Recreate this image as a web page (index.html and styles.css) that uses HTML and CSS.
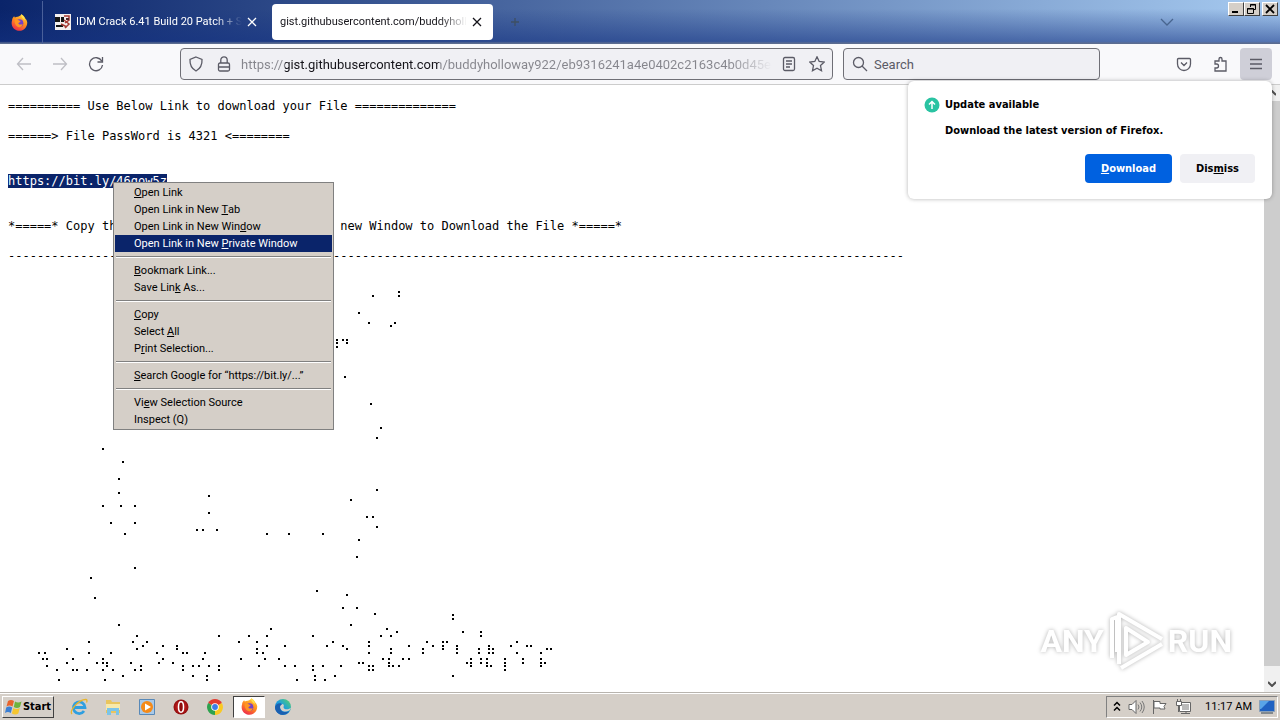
FILE: index.html
```
<!DOCTYPE html>
<html lang="en">
<head>
<meta charset="utf-8">
<title>gist.githubusercontent.com</title>
<link rel="stylesheet" href="styles.css">
</head>
<body>
<svg class="defs" width="0" height="0" aria-hidden="true">
  <defs>
    <linearGradient id="ffBody" x1="0.8" y1="0" x2="0.3" y2="1"><stop offset="0" stop-color="#ffd83c"/><stop offset="0.5" stop-color="#ff8a1e"/><stop offset="1" stop-color="#ee2a4c"/></linearGradient>
    <radialGradient id="opBody"><stop offset="0" stop-color="#e33"/><stop offset="1" stop-color="#8e0b0b"/></radialGradient>
    <linearGradient id="edgeBody" x1="0" y1="1" x2="1" y2="0"><stop offset="0" stop-color="#1464b4"/><stop offset="0.5" stop-color="#1b9de0"/><stop offset="1" stop-color="#5bd65f"/></linearGradient>
    <symbol id="firefox" viewBox="0 0 16 16">
      <path d="M1 6C1 4 2 3 3 2l.6 1.4C4.600 2.600 5.500 2.500 6.500 2.600 8 2 9 1.500 9.700.200 12 1.500 13 3 13.400 4.200c.8.5 1.600 1.800 1.900 3.800C15.300 12.500 12 15.800 8 15.800S.6 12.600.6 8.600C.6 7.500.7 6.700 1 6z" fill="url(#ffBody)"/>
      <circle cx="8" cy="8.600" r="3.600" fill="#7441c8"/>
      <path d="M3.500 5.500c1.500-.8 3-.5 4 .5 1 .3 1.500.2 1.500.8S7.500 8 7 8.500c0 1.500 2 2 4 .8C10.500 12 8 13 6 12S3 8 3.500 5.500z" fill="#ff9422"/>
      <path d="M9.700.200C12 1.500 13.200 3.200 13 6 12 4.500 9 3.500 9.700.200z" fill="#ffe14c"/>
    </symbol>
  </defs>
</svg>

<header class="browser">
  <div class="titlebar">
    <button class="view-button" aria-label="Firefox View"><svg width="17" height="17"><use href="#firefox"/></svg></button>
    <div class="tab">
      <svg class="favicon" width="16" height="16" viewBox="0 0 16 16"><path fill="#f4f0f0" d="M0 0h16v16H0z"/><path fill="#151515" d="M0 3h5v5H0zM6 3h3v5H6zM1 11h7v2H1z"/><path fill="none" stroke="#a63a32" stroke-width="1.500" d="M9 2h5v4l-4 3M9 6l5 4-4 4M6 10l6 3"/><path fill="#51282a" d="M11 4h3v2h-3z"/></svg>
      <button class="tab-title">IDM Crack 6.41 Build 20 Patch + Serial</button>
      <button class="close" aria-label="Close tab"><svg width="10" height="10" viewBox="0 0 10 10"><path d="M1 1l8 8M9 1L1 9"/></svg></button>
    </div>
    <div class="tab active">
      <button class="tab-title">gist.githubusercontent.com/buddyholloway922</button>
      <button class="close" aria-label="Close tab"><svg width="10" height="10" viewBox="0 0 10 10"><path d="M1 1l8 8M9 1L1 9"/></svg></button>
    </div>
    <button class="new-tab" aria-label="New tab"><svg width="10" height="10" viewBox="0 0 10 10"><path d="M5 1v8M1 5h8"/></svg></button>
    <button class="list-tabs" aria-label="List all tabs"><svg width="14" height="9" viewBox="0 0 14 9"><path d="M1 1l6 6 6-6"/></svg></button>
    <div class="window-buttons">
      <button aria-label="Minimize"><svg width="10" height="10" viewBox="0 0 10 10"><path fill="#000" d="M1 7h6v2H1z"/></svg></button>
      <button aria-label="Restore"><svg width="10" height="10" viewBox="0 0 10 10"><path fill="none" stroke="#000" d="M3.500 3V.5h5v5H7M.5 4.500h6v5h-6zM3 1h6M0 5h7"/></svg></button>
      <button class="window-close" aria-label="Close"><svg width="10" height="10" viewBox="0 0 10 10"><path stroke="#000" stroke-width="1.800" d="M1 1l8 8M9 1L1 9"/></svg></button>
    </div>
  </div>

  <div class="toolbar">
    <div class="nav">
      <button class="disabled" aria-label="Back" disabled><svg width="16" height="16" viewBox="0 0 16 16"><path d="M15 8H1.500M7 2L1.500 8 7 14"/></svg></button>
      <button class="disabled" aria-label="Forward" disabled><svg width="16" height="16" viewBox="0 0 16 16"><path d="M1 8h13.500M9 2l5.500 6L9 14"/></svg></button>
      <button aria-label="Reload"><svg width="16" height="16" viewBox="0 0 16 16"><path d="M13.700 5A6.500 6.500 0 1 0 14.500 9M14.500 1v5h-5"/></svg></button>
    </div>
    <div class="field address">
      <svg width="16" height="16" viewBox="0 0 16 16"><path d="M8 1l6 2.500c.3 5-1.500 9-6 11.500-4.500-2.500-6.300-6.500-6-11.500z"/></svg>
      <svg width="16" height="16" viewBox="0 0 16 16"><rect x="2.500" y="7" width="11" height="8" rx="1.500"/><path d="M4.800 7V4a3.200 3.200 0 0 1 6.400 0v3M3 11h10"/></svg>
      <input class="url" type="text" aria-label="Address" value="https://gist.githubusercontent.com/buddyholloway922/eb9316241a4e0402c2163c4b0d45edbf">
      <button aria-label="Reader view"><svg width="16" height="16" viewBox="0 0 16 16"><rect x="2.500" y="1.500" width="11" height="13" rx="1.500"/><path d="M5 5h6M5 8h6M5 11h4"/></svg></button>
      <button aria-label="Bookmark this page"><svg width="16" height="16" viewBox="0 0 16 16"><path d="M8 .8l2.200 4.700 5.100.6-3.800 3.500 1 5.100L8 12.200l-4.500 2.500 1-5.100L.7 6.100l5.100-.6z"/></svg></button>
    </div>
    <div class="field search">
      <svg width="16" height="16" viewBox="0 0 16 16"><circle cx="6.500" cy="6.500" r="5"/><path d="M10 10l5 5"/></svg>
      <input type="text" aria-label="Search" placeholder="Search">
    </div>
    <div class="actions">
      <button aria-label="Save to Pocket"><svg width="16" height="16" viewBox="0 0 16 16"><path d="M2.500 2.500h11a1 1 0 0 1 1 1V8a6.500 6.500 0 0 1-13 0V3.500a1 1 0 0 1 1-1zM5 6.500l3 3 3-3"/></svg></button>
      <button aria-label="Extensions"><svg width="16" height="16" viewBox="0 0 16 16"><path d="M3 5h4V3a1.500 1.500 0 0 1 3 0v2h4v10H3v-3h1.500a1.500 1.500 0 0 0 0-4H3z"/></svg></button>
      <button class="menu-open" aria-label="Open application menu"><svg width="16" height="16" viewBox="0 0 16 16"><path d="M2 3.500h12M2 8h12M2 12.500h12"/></svg></button>
    </div>
  </div>

  <section class="popup">
    <svg width="16" height="16" viewBox="0 0 16 16"><circle cx="8" cy="8" r="7.500" fill="#2ac3a2"/><path d="M8 12V4.500M5 7.500l3-3 3 3" fill="none" stroke="#fff" stroke-width="1.500"/></svg>
    <div class="popup-text">
      <h2>Update available</h2>
      <p>Download the latest version of Firefox.</p>
    </div>
    <div class="popup-buttons">
      <button class="primary"><u>D</u>ownload</button>
      <button>Dis<u>m</u>iss</button>
    </div>
  </section>
</header>

<main class="viewport">
  <div class="document">
<pre>========== Use Below Link to download your File ==============

======&gt; File PassWord is 4321 &lt;========


<span class="selected">https://bit.ly/46gow5z</span>


*=====* Copy the Link and Paste it inside the new Window to Download the File *=====*

----------------------------------------------------------------------------------------------------------------------------</pre>
    <svg class="dots" width="560" height="419" viewBox="8 264 560 419" role="img" aria-label="Dot art"></svg>
  </div>
  <div class="scrollbar">
    <button aria-label="Scroll up"><svg width="8" height="6" viewBox="0 0 8 6"><path d="M0 5l4-4 4 4"/></svg></button>
    <div class="thumb"></div>
    <button aria-label="Scroll down"><svg width="8" height="6" viewBox="0 0 8 6"><path d="M0 1l4 4 4-4"/></svg></button>
  </div>

  <div class="watermark">
    <span>ANY</span>
    <svg width="58" height="62" viewBox="0 0 58 62"><path d="M5 48V9l5-2v35M12 54V4l43 25M19 18v27l22-13zM14 58l41-24"/></svg>
    <span>RUN</span>
  </div>
</main>

<div class="context-menu" role="menu">
  <button role="menuitem"><u>O</u>pen Link</button>
  <button role="menuitem">Open Link in New <u>T</u>ab</button>
  <button role="menuitem">Open Link in New Win<u>d</u>ow</button>
  <button role="menuitem" class="highlight">Open Link in New <u>P</u>rivate Window</button>
  <hr>
  <button role="menuitem"><u>B</u>ookmark Link...</button>
  <button role="menuitem">Save Lin<u>k</u> As...</button>
  <hr>
  <button role="menuitem"><u>C</u>opy</button>
  <button role="menuitem">Select <u>A</u>ll</button>
  <button role="menuitem">P<u>r</u>int Selection...</button>
  <hr>
  <button role="menuitem"><u>S</u>earch Google for “https://bit.ly/...”</button>
  <hr>
  <button role="menuitem">Vi<u>e</u>w Selection Source</button>
  <button role="menuitem">Inspect (Q)</button>
</div>

<footer class="taskbar">
  <button class="start"><svg width="17" height="16" viewBox="0 0 17 16"><path fill="#e8632c" d="M3 2q3-2 6 0L7.500 7.500q-3-2-6 0z"/><path fill="#6fb33d" d="M10 2.500q3 2 6.500 0L15 8q-3 2-6.200 0z"/><path fill="#3b7fd4" d="M1.200 8.500q3-2 6 0L5.800 14q-3-2-5.800 0z"/><path fill="#f6c62f" d="M8.300 9q3 2 6.500 0l-1.500 5.500q-3 2-6.400 0z"/></svg>Start</button>
  <div class="launchers">
    <button aria-label="Internet Explorer"><svg width="18" height="18" viewBox="0 0 18 18"><path fill="none" stroke="#2f9fe0" stroke-width="2.800" d="M4 9.500h11A5.800 5.800 0 1 0 14 13"/><path fill="none" stroke="#e8b52c" stroke-width="1.300" d="M2 16C-1 13 9 1 16 1.500c1.500.3 1 2 .5 3"/></svg></button>
    <button aria-label="File Explorer"><svg width="18" height="18" viewBox="0 0 18 18"><path fill="#e9c55e" d="M2 2h5l1 2h8v11H2z"/><path fill="#f8e9a9" d="M2 6h14v6H2z"/><path fill="#7cc4e8" d="M3 10h12v7h-3v-4H7v4H3z"/></svg></button>
    <button aria-label="Media Player"><svg width="18" height="18" viewBox="0 0 18 18"><path fill="#a9c9e8" stroke="#5889b8" d="M1.500 1.500h15v15h-15z"/><circle cx="9" cy="9" r="6" fill="#f58a18"/><path fill="#fff" d="M7 5.500v7l6-3.500z"/></svg></button>
    <button aria-label="Opera"><svg width="18" height="18" viewBox="0 0 18 18"><circle cx="9" cy="9" r="7.500" fill="url(#opBody)"/><ellipse cx="9" cy="9" rx="2.500" ry="5.200" fill="#8e0b0b" stroke="#fff" stroke-width="1.500"/></svg></button>
    <button aria-label="Chrome"><svg width="18" height="18" viewBox="0 0 18 18"><path fill="#e23c30" d="M9 9L2.100 5A8 8 0 0 1 15.900 5z"/><path fill="#f9c922" d="M9 9l6.900-4A8 8 0 0 1 9 17z"/><path fill="#2ea24e" d="M9 9v8A8 8 0 0 1 2.100 5z"/><circle cx="9" cy="9" r="3.800" fill="#fff"/><circle cx="9" cy="9" r="2.900" fill="#3b7de8"/></svg></button>
    <button class="running" aria-label="Firefox"><svg width="17" height="17"><use href="#firefox"/></svg></button>
    <button aria-label="Edge"><svg width="18" height="18" viewBox="0 0 18 18"><circle cx="9" cy="9" r="8" fill="url(#edgeBody)"/><path fill="#d5cfc8" d="M9.500 9c1-2 0-3-1.500-3C5 6 5.500 13 10 13.500c2 .3 4-.2 5.800-1.500l1.500-2.500C15 12 9.500 12 9.500 9z"/><path fill="#1a5fb0" d="M1 9c1-4 6-5 7-2.500C5 7 5 13 10 14c2 .3 4 0 5.500-1-3 4.500-8 4.500-11 2.500Q1 13 1 9z"/></svg></button>
  </div>
  <div class="tray">
    <svg width="8" height="11" viewBox="0 0 8 11"><path d="M1 4.500l3-3 3 3M1 9.500l3-3 3 3" fill="none" stroke="#000" stroke-width="1.500"/></svg>
    <svg width="17" height="16" viewBox="0 0 17 16"><path d="M1 5.500h3l4-4v13l-4-4H1z" fill="#fff" stroke="#666"/><path d="M10 5.500q2 2.500 0 5M12 3.500q3.500 4.500 0 9M14 2q4.500 6 0 12" fill="none" stroke="#777"/></svg>
    <svg width="16" height="16" viewBox="0 0 16 16"><path d="M1.500 1v14M2 2.500h6v2h6l-2 3 1 2.500H8V9H2z" fill="#fff" stroke="#666"/></svg>
    <svg width="17" height="16" viewBox="0 0 17 16"><path d="M4.500 3.500h11v9h-11zM6 14.500h9M11 12v3" fill="#fff" stroke="#666"/><path fill="#bbb" d="M7 5h7v6H7z"/><path d="M1.500 2.500h5v4h-5zM3.500 7v6M2.500 0v3M5.500 0v3" fill="#fff" stroke="#666"/></svg>
    <time>11:17 AM</time>
    <svg width="16" height="14" viewBox="0 0 16 14"><path d="M.5.5h15v11H.5z" fill="#1f62c2" stroke="#8aa0b8"/><path d="M1 1h9L2 9H1z" fill="#58a5e8"/><path d="M2 13h12" stroke="#345"/></svg>
  </div>
</footer>
<script src="dots.js"></script>
</body>
</html>
```
FILE: styles.css
```
* { box-sizing: border-box; }
body {
  margin: 0;
  min-height: 100vh;
  display: flex;
  flex-direction: column;
  position: relative;
  background: #fff;
  color: #000;
  font: 11px/16px Roboto, "Liberation Sans", sans-serif;
}
button, input { font: inherit; color: inherit; border: 0; background: none; padding: 0; margin: 0; }
button { display: flex; align-items: center; justify-content: center; flex: none; }
svg { flex: none; display: block; }
u { text-decoration: underline; text-underline-offset: 1px; }
.defs { position: absolute; }

.browser { position: relative; }
.titlebar {
  height: 44px;
  display: flex;
  align-items: center;
  background: linear-gradient(to bottom, rgba(20, 50, 130, 0) 20%, rgba(20, 50, 130, .55) 94%, #5b6c90 98%), linear-gradient(to right, #0a246a, #a6caf0);
}
.view-button { width: 43px; height: 43px; padding-right: 4px; border-right: 1px solid #4a609a; }
.tab { width: 221px; height: 36px; margin-left: 4px; padding: 0 11px 0 8px; display: flex; align-items: center; gap: 5px; color: #fff; border-radius: 4px; }
.tab + .tab { margin-left: 4px; }
.tab-title {
  flex: 1;
  min-width: 0;
  overflow: hidden;
  white-space: nowrap;
  justify-content: flex-start;
  mask-image: linear-gradient(to left, transparent, #000 28px);
}
.close svg, .new-tab svg, .list-tabs svg { fill: none; stroke: currentColor; stroke-width: 1.300px; }
.tab.active { background: #fff; color: #15141a; }
.new-tab { width: 44px; height: 36px; color: #3e4f63; }
.list-tabs { margin-left: auto; margin-right: 52px; color: #48658f; }
.window-buttons { align-self: flex-start; display: flex; padding: 2px; }
.window-buttons button { width: 16px; height: 14px; background: #d5cfc8; border: 1px solid; border-color: #fff #404040 #404040 #fff; }
.window-buttons .window-close { margin-left: 2px; }

.toolbar {
  height: 41px;
  padding: 0 8px;
  display: flex;
  align-items: center;
  background: #f9f9fb;
  border-bottom: 1px solid #ccc;
  color: #5b5b66;
}
.toolbar svg { fill: none; stroke: currentColor; stroke-width: 1.300px; }
.nav { display: flex; gap: 4px; width: 172px; }
.nav button { width: 32px; height: 32px; }
.nav .disabled { color: #bfbfc5; }
.field { height: 32px; display: flex; align-items: center; background: #f0f0f4; border: 1px solid #6f6f76; border-radius: 4px; font-size: 13px; }
.field input { flex: 1; min-width: 0; height: 28px; outline: 0; }
.address { flex: 1; padding: 0 7px; gap: 12px; }
.address .url {
  color: transparent;
  -webkit-background-clip: text;
  background-clip: text;
  background-image: linear-gradient(to right, #85858c 44px, #15141a 44px, #15141a 198px, #85858c 198px, #85858c 92%, transparent);
  margin: 0 -3px;
}
.search { width: 257px; margin-left: 10px; padding: 0 8px; gap: 6px; }
.search input::placeholder { color: #5b5b66; opacity: 1; }
.actions { display: flex; gap: 4px; margin-left: 68px; }
.actions button { width: 32px; height: 32px; border-radius: 4px; }
.actions .menu-open { background: #cfcfd8; }

.popup {
  position: absolute;
  z-index: 2;
  right: 8px;
  top: 81px;
  width: 364px;
  padding: 16px 17px 16px 16px;
  display: grid;
  grid-template-columns: 16px 1fr;
  column-gap: 5px;
  row-gap: 15px;
  background: #fff;
  border-radius: 6px;
  box-shadow: 0 0 4px rgba(0, 0, 0, .3);
  font-family: "DejaVu Sans Condensed", "DejaVu Sans", sans-serif;
  font-weight: bold;
}
.popup h2, .popup p { margin: 0; font-size: 11px; line-height: 16px; }
.popup p { margin-top: 10px; }
.popup-buttons { grid-column: 1 / 3; display: flex; justify-content: flex-end; gap: 8px; }
.popup-buttons button { min-width: 75px; height: 29px; padding: 0 15px; border-radius: 4px; background: #f0f0f4; }
.popup-buttons .primary { background: #0061e0; color: #fff; min-width: 87px; }

.viewport { flex: 1; display: flex; position: relative; }
.document { flex: 1; min-width: 0; overflow: hidden; padding: 14px 8px 0; }
.document pre { margin: 0; font: 12px/15px "DejaVu Sans Mono", monospace; }
.selected { background: #0a246a; color: #fff; }
.dots { fill: #000; }
.scrollbar { width: 16px; display: flex; flex-direction: column; background: #f0f0f0; }
.scrollbar button { height: 16px; }
.scrollbar svg { fill: none; stroke: #505050; stroke-width: 2px; }
.thumb { flex: 1; background: #cdcdcd; margin-bottom: 10px; }
.watermark {
  position: absolute;
  right: 48px;
  bottom: 20px;
  display: flex;
  align-items: center;
  gap: 3px;
  font: bold 32px/62px Roboto, "Liberation Sans", sans-serif;
  color: #fff;
  filter: drop-shadow(0 0 2px rgba(0, 0, 0, .3));
}
.watermark svg { fill: none; stroke: #fff; stroke-width: 4px; stroke-linejoin: round; }

.context-menu {
  position: absolute;
  z-index: 3;
  left: 113px;
  top: 182px;
  width: 221px;
  padding: 1px;
  background: #d5cfc8;
  border: 1px solid #808080;
}
.context-menu button { width: 100%; height: 17px; padding-left: 19px; justify-content: flex-start; white-space: pre; }
.context-menu .highlight { background: #0a246a; color: #fff; }
.context-menu hr { height: 2px; margin: 4px 1px; border: 0; border-top: 1px solid #808080; border-bottom: 1px solid #fff; }

.taskbar {
  height: 28px;
  display: flex;
  align-items: center;
  padding: 2px;
  background: #d5cfc8;
  border-top: 1px solid #b8b4ae;
  box-shadow: inset 0 1px #fff;
}
.start { height: 22px; width: 52px; gap: 1px; font-family: "DejaVu Sans Condensed", "DejaVu Sans", sans-serif; font-weight: bold; border: 1px solid; border-color: #fff #404040 #404040 #fff; }
.launchers { display: flex; margin-left: 9px; gap: 2px; }
.launchers button { width: 32px; height: 22px; }
.launchers .running { background: #fff; border: 1px solid; border-color: #404040 #fff #fff #404040; }
.tray { margin-left: auto; height: 22px; padding: 0 2px 0 6px; display: flex; align-items: center; gap: 7px; border: 1px solid; border-color: #808080 #fff #fff #808080; }
.tray time { margin-left: 6px; }
```
FILE: dots.js
```
// Each row is a baseline followed by the horizontal centres of its dots.
const rows = [
  [292, 399], [296, 373, 399], [313, 359], [323, 369, 395], [326, 391],
  [340, 337, 343, 347], [343, 337, 347], [347, 337], [377, 345], [404, 371],
  [428, 381], [438, 377], [449, 103], [462, 123], [479, 119], [490, 377],
  [493, 119], [496, 209], [500, 351], [506, 103, 121, 135], [513, 209],
  [517, 367, 373], [523, 111, 135], [527, 377], [530, 197, 203, 217],
  [534, 125, 267, 289, 323], [540, 359], [557, 357], [568, 135], [578, 91],
  [591, 317], [595, 347], [598, 95], [608, 343, 357], [614, 375],
  [615, 453], [619, 453], [625, 119, 351], [629, 271, 387], [632, 397, 463, 481],
  [636, 137, 219, 249, 267, 313, 381, 391, 481],
  [642, 89, 133, 147, 239, 257, 333, 369, 427, 443, 447, 517],
  [646, 143, 163, 177, 267, 285, 327, 343, 369, 409, 433, 443, 457, 489, 511, 527, 531],
  [649, 67, 137, 177, 257, 347, 391, 423, 443, 457, 479, 489, 493, 547, 551],
  [653, 39, 45, 89, 111, 157, 183, 187, 205, 257, 263, 369, 391, 423, 457, 479, 489, 493, 517, 541],
  [659, 43, 47, 73, 103, 163, 203, 241, 265, 279, 383, 389, 403, 409, 471, 481, 487, 505, 523, 541],
  [663, 67, 97, 103, 107, 131, 159, 173, 359, 363, 389, 467, 471, 481, 487, 505, 523, 541, 545],
  [666, 47, 107, 141, 183, 193, 199, 209, 219, 259, 285, 295, 313, 323, 341, 369, 373, 389, 393, 399, 471, 487, 491, 505, 541],
  [670, 57, 73, 77, 87, 103, 113, 135, 141, 183, 219, 313, 369, 373, 505],
  [676, 123, 193, 207, 315, 335, 453],
  [680, 59, 105, 207, 297, 315, 325],
];

const art = document.querySelector(".dots");
for (const [y, ...columns] of rows) {
  for (const x of columns) {
    const dot = document.createElementNS("http://www.w3.org/2000/svg", "rect");
    dot.setAttribute("x", x - 1);
    dot.setAttribute("y", y - 1);
    dot.setAttribute("width", 2);
    dot.setAttribute("height", 2);
    art.append(dot);
  }
}
```
